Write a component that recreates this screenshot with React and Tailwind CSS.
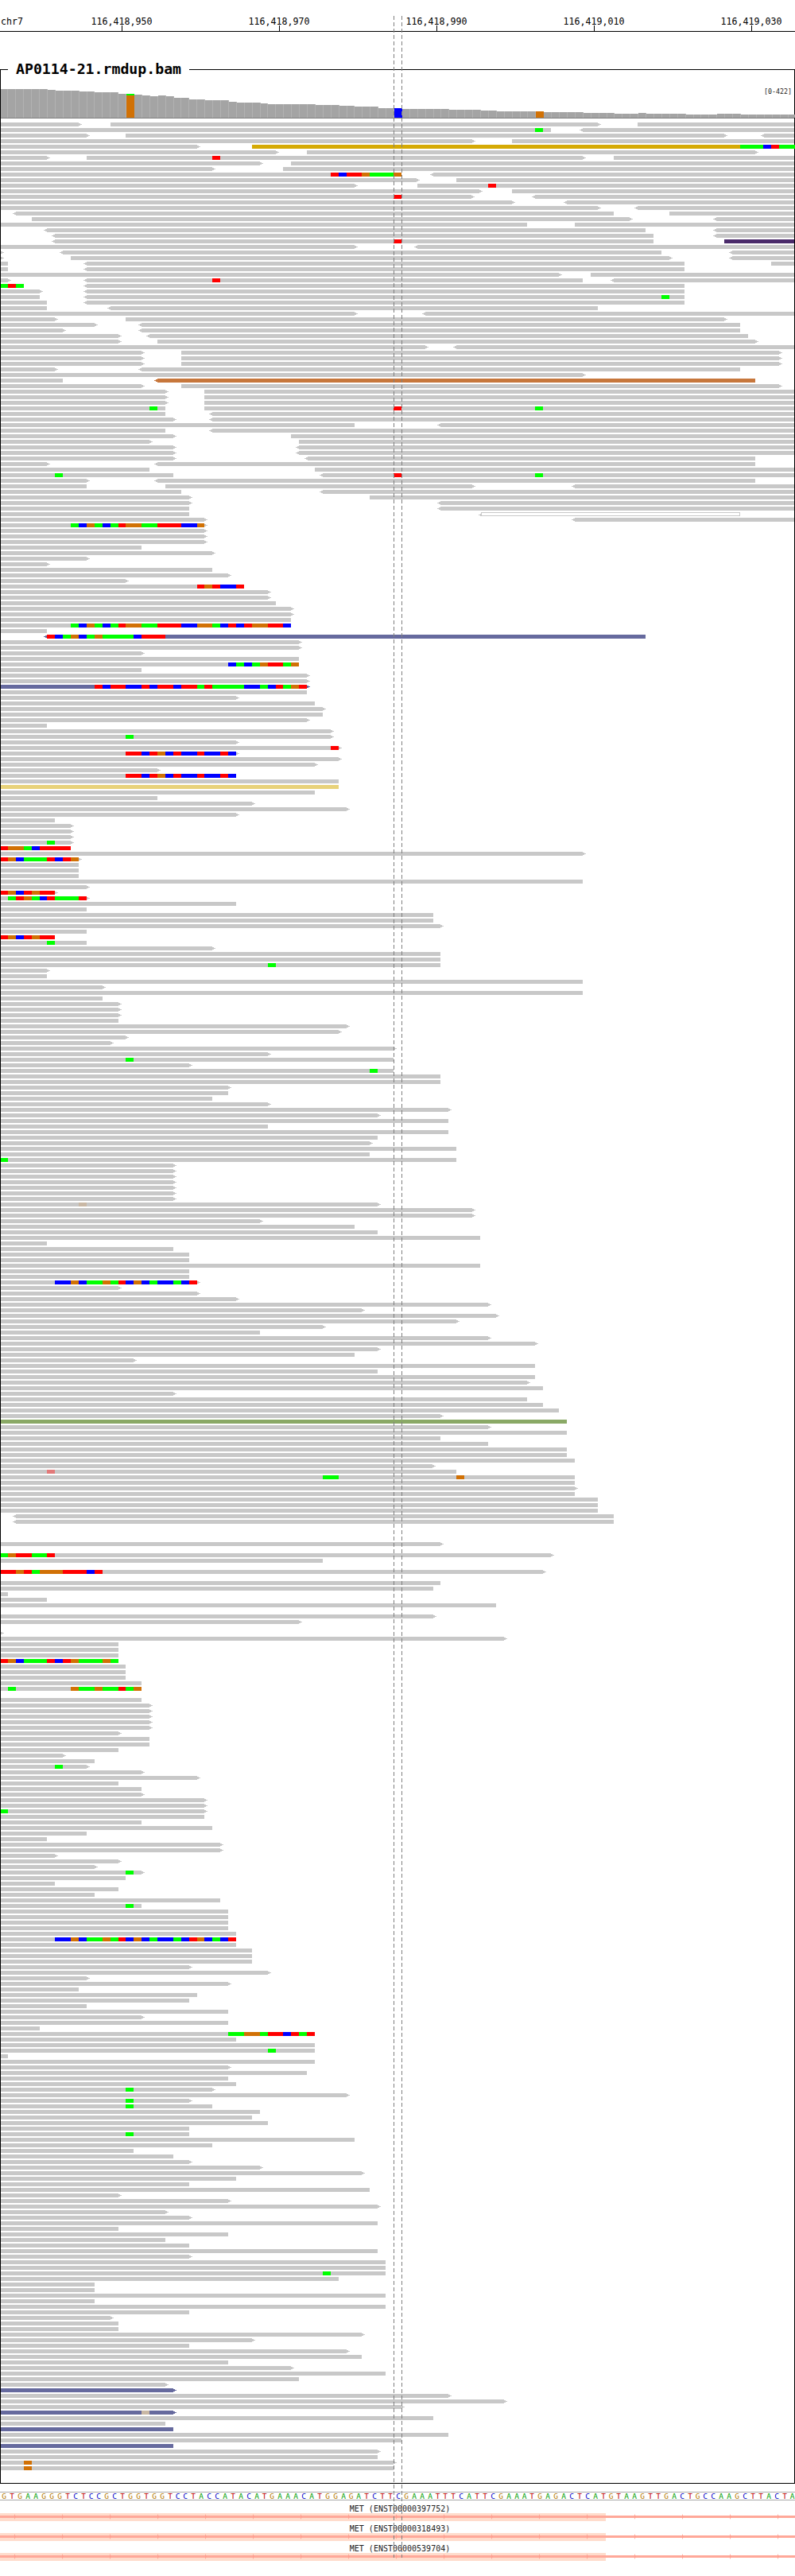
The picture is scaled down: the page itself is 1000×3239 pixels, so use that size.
import React from 'react';

// IGV style pileup. Reads are written as start-end in the units of the crop they were read from.
// "<" / ">" = strand arrow, capital letter = coloured read, lowercase token = mismatch run
const rowsTop = `2-161> 218-1185> 1258-1568
2-1087 g1055-1071 <1143-1568
2-177> 248-1435> <1500-1568
2-938> 1010-1568
2-395> Y497-1568 g1460-1505 b1505-1521 r1521-1537 g1537-1568
2-550> 605-1496>
2-99> 171-1155> 1210-1568 r419-434
2-519> 574-1568
2-425> 558-1568
2-792 r652-668 b668-684 r684-713 o713-729 g729-776 o776-792 <849-1568
2-828> 900-1568
2-706> 823-1568 r963-978
2-951> 1010-1568`;

// these are in real pixels
const rowsPx = `1-597> <669-999 r495-505
1-648> <709-999
1-756> <798-999
<16-772 842-999
40-796> <897-999
1-663 723-999
<55-812 <897-999
<65-822 <897-999
<65-822 r495-505 P911-999
1-450> <521-999
1-4> <75-832 <917-999
1-4> 89-846> <917-999
1-10 <105-861 970-999
1-10 <105-861
1-707> 743-999
1-14> <105-733 r267-277 <768-999
1-30 g1-10 r10-20 g20-30 <105-861
1-54> <105-861
1-50 <105-861 g832-842
1-59 <105-861
1-59 <135-752
1-450> <531-999
1-73> 158-915>
1-123> <174-931
1-83> <174-931
1-153> <184-941
1-153> 198-954>
1-539> <570-999
1-182> 228-984>
1-182> 228-984>
1-182> 228-984>
1-73> <174-931
1-737>
1-79 O<194-950
1-182> 228-984>
1-212> 257-999
1-212> 257-999
1-212> 257-999
1-208 g188-198 257-999 r495-505 g673-683
1-208 <263-999
1-222> <263-999
1-446 <550-999`;

const rowsRest = `2-326 <413-1568
2-348> 574-1568
2-301> 590-1568
2-348> <584-1568
2-348> <584-1568
2-348> <600-1490
2-99> <304-1490
2-295 621-1568
2-342 g108-124 <630-1568 r776-792 g1055-1071
2-177> <304-1490
2-171 326-938> <1127-1568
2-358 <630-1568
2-379> 729-1568
2-379> <862-1568
2-373 <862-1568
2-373 W<942-1460
2-409> <1127-1568
2-409> g140-155 b155-171 o171-187 g187-202 b202-218 g218-234 r234-248 o248-279 g279-310 r310-358 b358-389 o389-403
2-409>
2-409>
2-409>
2-279
2-425>
2-177>
2-99>
2-419
2-456>
2-254>
2-481 r389-403 o403-419 r419-434 b434-466 r466-481
2-535>
2-535>
2-544
2-580>
2-580>
2-574
2-574 g140-155 b155-171 o171-187 g187-202 b202-218 g218-234 r234-248 o248-279 g279-310 r310-358 b358-389 o389-419 g419-434 b434-450 r450-466 b466-481 r481-497 o497-528 r528-558 b558-574
2-93
N<87-1273 r93-108 b108-124 g124-140 o140-155 b155-171 g171-187 o187-202 g202-263 b263-279 r279-326
2-596>
2-596>
2-285>
2-590
2-590 b450-466 g466-481 b481-497 g497-513 o513-528 r528-558 g558-574 o574-590
2-279
2-612>
2-612>
N2-612> r187-202 b202-218 r218-248 b248-279 r279-295 b295-310 r310-342 b342-358 r358-389 g389-403 r403-419 g419-481 b481-513 g513-528 b528-544 r544-558 g558-574 o574-590 r590-605
2-605
2-472>
2-621
2-643>
2-637
2-612>
2-93
2-659>
2-659> g248-263
2-472>
2-674> r652-668
2-472> r248-279 b279-295 r295-310 o310-326 b326-342 r342-358 b358-389 r389-403 b403-434 r434-450 b450-466
2-674>
2-627>
2-317>
2-466 r248-279 b279-295 r295-310 o310-326 b326-342 r342-358 b358-389 r389-403 b403-434 r434-450 b450-466
2-668
K2-668
2-621
2-310
2-503>
2-690>
2-472>
2-108
2-146>
2-146>
2-146>
2-146> g93-108
2-140 r2-16 o16-47 g47-63 b63-78 r78-140
2-1156>
2-162> r2-16 o16-31 b31-47 g47-93 r93-108 b108-124 r124-140 o140-155
2-155
2-155
2-155
2-1149
2-177>
2-114> r2-16 o16-31 b31-47 r47-63 o63-78 r78-108
2-177> g16-31 r31-47 o47-63 g63-78 b78-93 r93-108 g108-155 r155-171
2-466
2-171
2-855
2-855
2-875>
2-171
2-108 r2-16 o16-31 b31-47 r47-63 o63-78 r78-108
2-171 g93-108
2-425>
2-869
2-869
2-869 g528-544
2-99>
2-93
2-1149
2-208>
2-1149
2-202
2-240>
2-240>
2-240>
2-234
2-690>
2-674>
2-254>
2-224>
2-782>
2-535>
2-776 g248-263
2-379>
2-776 g729-745
2-869
2-869
2-456>
2-450
2-419
2-535>
2-891>
2-751>
2-884
2-528
2-884
2-745
2-735>
2-900
2-729
2-900 g2-16
2-348>
2-348>
2-348>
2-348>
2-348>
2-348>
2-348>
2-751> c155-171
2-938>
2-938>
2-519>
2-699
2-745
2-947
2-93
2-342
2-373
2-373
2-947
2-373
2-373
2-395> b108-140 o140-155 b155-171 g171-202 o202-218 g218-234 r234-248 b248-263 o263-279 b279-295 g295-310 b310-342 g342-358 b358-373 r373-389
2-240>
2-395>
2-472>
2-969>
2-720>
2-985>
2-906>
2-643>
2-513
2-969>
2-1062>
2-751>
2-699
2-270>
2-1055
2-745
2-1055
2-1046>
2-1071
2-348>
2-1040
2-1071
2-1102
2-875>
L2-1118
2-969>
2-1118
2-869
2-963
2-1118
2-1118
2-1134
2-860>
2-900 e93-108
2-1134 g637-668 o900-916
2-1134
2-1140>
2-1134
2-1179
2-1179
2-1179
<25-1210
<25-1210
.
.
.
2-875>
.
2-1093> g2-16 o16-31 r31-63 g63-93 r93-108
2-637
.
2-1077> r2-31 o31-47 r47-63 g63-78 o78-124 r124-171 b171-187 r187-202
.
2-869
2-855
2-16
2-93
2-978
.
2-861>
2-596>
.
2-6>
2-1000>
2-234
2-234
2-234
2-234 r2-16 o16-31 b31-47 g47-93 r93-108 b108-124 r124-140 o140-155 g155-202 o202-218 g218-234
2-248
2-248
2-248
2-279
2-279 g16-31 o140-155 g155-187 o187-202 g202-234 r234-248 g248-263 o263-279
.
2-279
2-301>
2-301>
2-301>
2-301>
2-301>
2-240>
2-295
2-295
2-234
2-130>
2-187
2-177> g108-124
2-285>
2-395>
2-234
2-279
2-285>
2-409>
2-409>
2-409> g2-16
2-403
2-279
2-419
2-171
2-93
2-441>
2-441>
2-114>
2-240>
2-193>
2-285> g248-263
2-248
2-108
2-234
2-187
2-434
2-279 g248-263
2-450
2-450
2-450
2-450
2-466
2-466 b108-140 o140-155 b155-171 g171-202 o202-218 g218-234 r234-248 b248-263 o263-279 b279-295 g295-310 b310-342 g342-358 b358-373 r373-389 o389-403 b403-419 g419-434 b434-450 r450-466
2-466
2-497
2-497
2-497
2-379>
2-535>
2-177>
2-456>
2-155
2-389
2-373
2-171
2-450
2-285>
2-450
2-78
2-621 g450-481 o481-513 g513-528 r528-558 b558-574 r574-590 g590-605 r605-621
2-466
2-621
2-621 g528-544
2-16
2-621
2-456>
2-605
2-450
2-466
2-425> g248-263
2-690>
2-379> g248-263
2-419 g248-263
2-513
2-497
2-528
2-373
2-373 g248-263
2-699
2-419
2-263
2-342
2-379>
2-519>
2-720>
2-466
2-373
2-729
2-240>
2-456>
2-751>
2-332>
2-379>
2-745
2-234
2-450
2-326
2-373
2-745
2-379>
2-760
2-760
2-760 g637-652
2-668
2-187
2-187
2-760
2-187
2-760
2-373
2-224>
2-234
2-234
2-720>
2-503>
2-373
2-690>
2-713
2-450
2-580>
2-760
2-590
2-332>
N2-348>
2-891>
2-1000>
2-798>
N2-348> c279-295
2-855
2-326
N2-342
2-884
2-792
N2-342
2-751>
2-745
2-782> o47-63
2-776 o47-63`;

const Z = 1.568;

const readColors = {
  '': 'bg-[#c8c8c8] text-[#c8c8c8]',
  Y: 'bg-[#d5aa05] text-[#d5aa05]',
  O: 'bg-[#c7773c] text-[#c7773c]',
  P: 'bg-[#4a2a6a] text-[#4a2a6a]',
  N: 'bg-[#666a9e] text-[#666a9e]',
  K: 'bg-[#e8d27a] text-[#e8d27a]',
  L: 'bg-[#8aa966] text-[#8aa966]',
  W: 'bg-white border border-[#c8c8c8] text-[#c8c8c8]',
};

const mismatchColors = {
  g: 'bg-[#00ff00]',
  b: 'bg-[#0000ff]',
  r: 'bg-[#ff0000]',
  o: 'bg-[#d17105]',
  c: 'bg-[#c9b8a5]',
  e: 'bg-[#e27a7a]',
};

const parseRow = (line, scale) => {
  const reads = [];
  const runs = [];
  line.trim().split(' ').forEach((tok) => {
    const read = tok.match(/^([YOPKLNW]?)(<?)(\d+)-(\d+)(>?)$/);
    const run = tok.match(/^([grboce])(\d+)-(\d+)$/);
    if (read) {
      reads.push({
        color: read[1],
        left: !!read[2],
        right: !!read[5],
        start: Math.max(Math.round(read[3] / scale), 1) + (read[2] ? 4 : 0),
        end: Math.min(Math.round(read[4] / scale), 999) - (read[5] ? 4 : 0),
      });
    } else if (run) {
      runs.push({ color: run[1], start: Math.round(run[2] / scale), end: Math.round(run[3] / scale) });
    }
  });
  reads.forEach((r) => {
    r.runs = runs.filter((m) => m.start >= r.start - 4 && m.start < r.end + 4);
  });
  return reads;
};

const rows = [
  ...rowsTop.split('\n').map((l) => parseRow(l, Z)),
  ...rowsPx.split('\n').map((l) => parseRow(l, 1)),
  ...rowsRest.split('\n').map((l) => parseRow(l, Z)),
];

// top of each coverage column, in page y, as [how many bases, y]
const coverageSteps = [
  [6, 112], [1, 113], [3, 114], [2, 115], [3, 116], [1, 118], [1, 118], [1, 119], [1, 120], [1, 121], [1, 120], [1, 121],
  [2, 123], [2, 125], [3, 126], [1, 128], [3, 129], [1, 130], [6, 131], [3, 132], [2, 133], [3, 134], [2, 136], [1, 136],
  [6, 137], [4, 138], [2, 139], [5, 140], [1, 140], [5, 141], [4, 142], [3, 143], [1, 142], [5, 143], [4, 144], [3, 143], [7, 144],
];
const coverage = coverageSteps.flatMap(([n, y]) => Array(n).fill(y));

const baseEdge = (k) => Math.max(Math.round(0.5 + 9.91 * k), 1);

const sequence = 'GTGAAGGGTCTCCGCTGGTGGTCCTACCATACATGAAACATGGAGATCTTCGAAATTTCATTCGAAATGAGACTCATGTAAGTTGACTGCCAAGCTTACTA';
const letterColors = { A: 'text-[#00a000]', C: 'text-[#0000c8]', G: 'text-[#b87a00]', T: 'text-[#c00000]' };

const ticks = ['116,418,950', '116,418,970', '116,418,990', '116,419,010', '116,419,030'];

const genes = ['MET (ENST00000397752)', 'MET (ENST00000318493)', 'MET (ENST00000539704)'];
const chevrons = Array.from({ length: 17 }, (_, i) => 18 + i * 60);

const Read = ({ read, prevEnd }) => {
  const width = Math.max(read.end - read.start, 0);
  return (
    <div
      className={`relative h-[5px] shrink-0 ${readColors[read.color]}`}
      style={{ marginLeft: read.start - prevEnd, width }}
    >
      {read.right && (
        <>
          <span className="absolute left-full top-[1px] h-[3px] w-[2px] bg-current" />
          <span className="absolute left-[calc(100%+2px)] top-[2px] h-[1px] w-[2px] bg-current" />
        </>
      )}
      {read.left && (
        <>
          <span className="absolute right-full top-[1px] h-[3px] w-[2px] bg-current" />
          <span className="absolute right-[calc(100%+2px)] top-[2px] h-[1px] w-[2px] bg-current" />
        </>
      )}
      {read.runs.map((m) => (
        <span
          key={m.start}
          className={`absolute top-0 h-[5px] ${mismatchColors[m.color]}`}
          style={{ left: m.start - read.start, width: m.end - m.start }}
        />
      ))}
    </div>
  );
};

const Row = ({ reads }) => {
  let prevEnd = 1;
  return (
    <div className="flex h-[5px]">
      {reads.map((read) => {
        const el = <Read key={read.start} read={read} prevEnd={prevEnd} />;
        prevEnd = Math.max(read.end, read.start);
        return el;
      })}
    </div>
  );
};

const Coverage = () => (
  <div className="relative mt-[24px] flex h-[37px] items-end border-b border-[#808080]">
    {coverage.slice(0, 101).map((top, k) => {
      const width = baseEdge(k + 1) - baseEdge(k);
      const height = 148 - top;
      if (k === 16) {
        return (
          <div key={k} className="flex shrink-0 flex-col" style={{ width, height }}>
            <div className="h-[2px] bg-[#00ff00]" />
            <div className="flex-1 bg-[#d17105]" />
          </div>
        );
      }
      if (k === 50) return <div key={k} className="shrink-0 bg-[#0000ff]" style={{ width, height }} />;
      if (k === 68) return <div key={k} className="shrink-0 bg-[#d17105]" style={{ width, height }} />;
      return <div key={k} className="shrink-0 border-r border-[#b2b2b2] bg-[#a4a4a4]" style={{ width, height }} />;
    })}
    <span className="absolute right-[3px] top-[-3px] text-[8.3px] leading-[12px] text-[#222]">[0-422]</span>
  </div>
);

const Gene = ({ name }) => (
  <div className="h-[25px]">
    <div className="h-[10px] pl-[6px] text-center text-[10px] leading-[10px] text-[#222]">{name}</div>
    <svg width="1000" height="10" className="block">
      <rect x="0" y="0" width="762" height="10" fill="#ffdccc" />
      <rect x="0" y="3" width="1000" height="3" fill="#ffa899" />
      {chevrons.map((x) => (
        <path key={x} d={`M${x} 1 L${x + 2} 4.5 L${x} 8 Z`} fill="#ff9f90" />
      ))}
    </svg>
  </div>
);

export default function App() {
  return (
    <div className="relative h-[3239px] w-[1000px] overflow-hidden bg-white font-['DejaVu_Sans_Mono',monospace] text-black">
      {/* Ruler */}
      <div className="flex h-[40px] border-b border-black pt-[22px] text-[11.6px]">
        <span className="w-[54px] shrink-0 pl-[1px] leading-[11px]">chr7</span>
        {ticks.map((label) => (
          <div key={label} className="flex w-[198px] shrink-0 flex-col items-center">
            <span className="h-[10px] leading-[11px]">{label}</span>
            <span className="h-[7px] w-px bg-black" />
          </div>
        ))}
      </div>

      {/* Track */}
      <div className="relative mt-[47px] h-[3036px] border border-black">
        <h1 className="absolute left-[9px] top-[-13px] bg-white px-[10px] text-[18.2px] font-bold leading-[24px]">
          AP0114-21.rmdup.bam
        </h1>
        <Coverage />
        <div className="mt-[5px] flex flex-col gap-[2px]">
          {rows.map((reads, i) => (
            <Row key={i} reads={reads} />
          ))}
        </div>
      </div>

      {/* Sequence */}
      <div className="mt-[10px] flex h-[11px] items-center border-y border-[#aaaaaa]">
        {sequence.split('').map((base, k) => (
          <span
            key={k}
            className={`shrink-0 text-center text-[9.5px] leading-[9px] ${letterColors[base]}`}
            style={{ width: Math.round(0.5 + 9.91 * (k + 1)) - (k === 0 ? 0 : Math.round(0.5 + 9.91 * k)) }}
          >
            {base}
          </span>
        ))}
      </div>

      {/* Genes */}
      <div className="mt-[6px]">
        {genes.map((g) => (
          <Gene key={g} name={g} />
        ))}
      </div>

      {/* Center guide lines */}
      <div className="pointer-events-none absolute left-[495px] top-[20px] h-[3196px] w-px bg-[repeating-linear-gradient(to_bottom,#808080_0,#808080_5px,transparent_5px,transparent_8px)]" />
      <div className="pointer-events-none absolute left-[505px] top-[20px] h-[3196px] w-px bg-[repeating-linear-gradient(to_bottom,#808080_0,#808080_5px,transparent_5px,transparent_8px)]" />
    </div>
  );
}
